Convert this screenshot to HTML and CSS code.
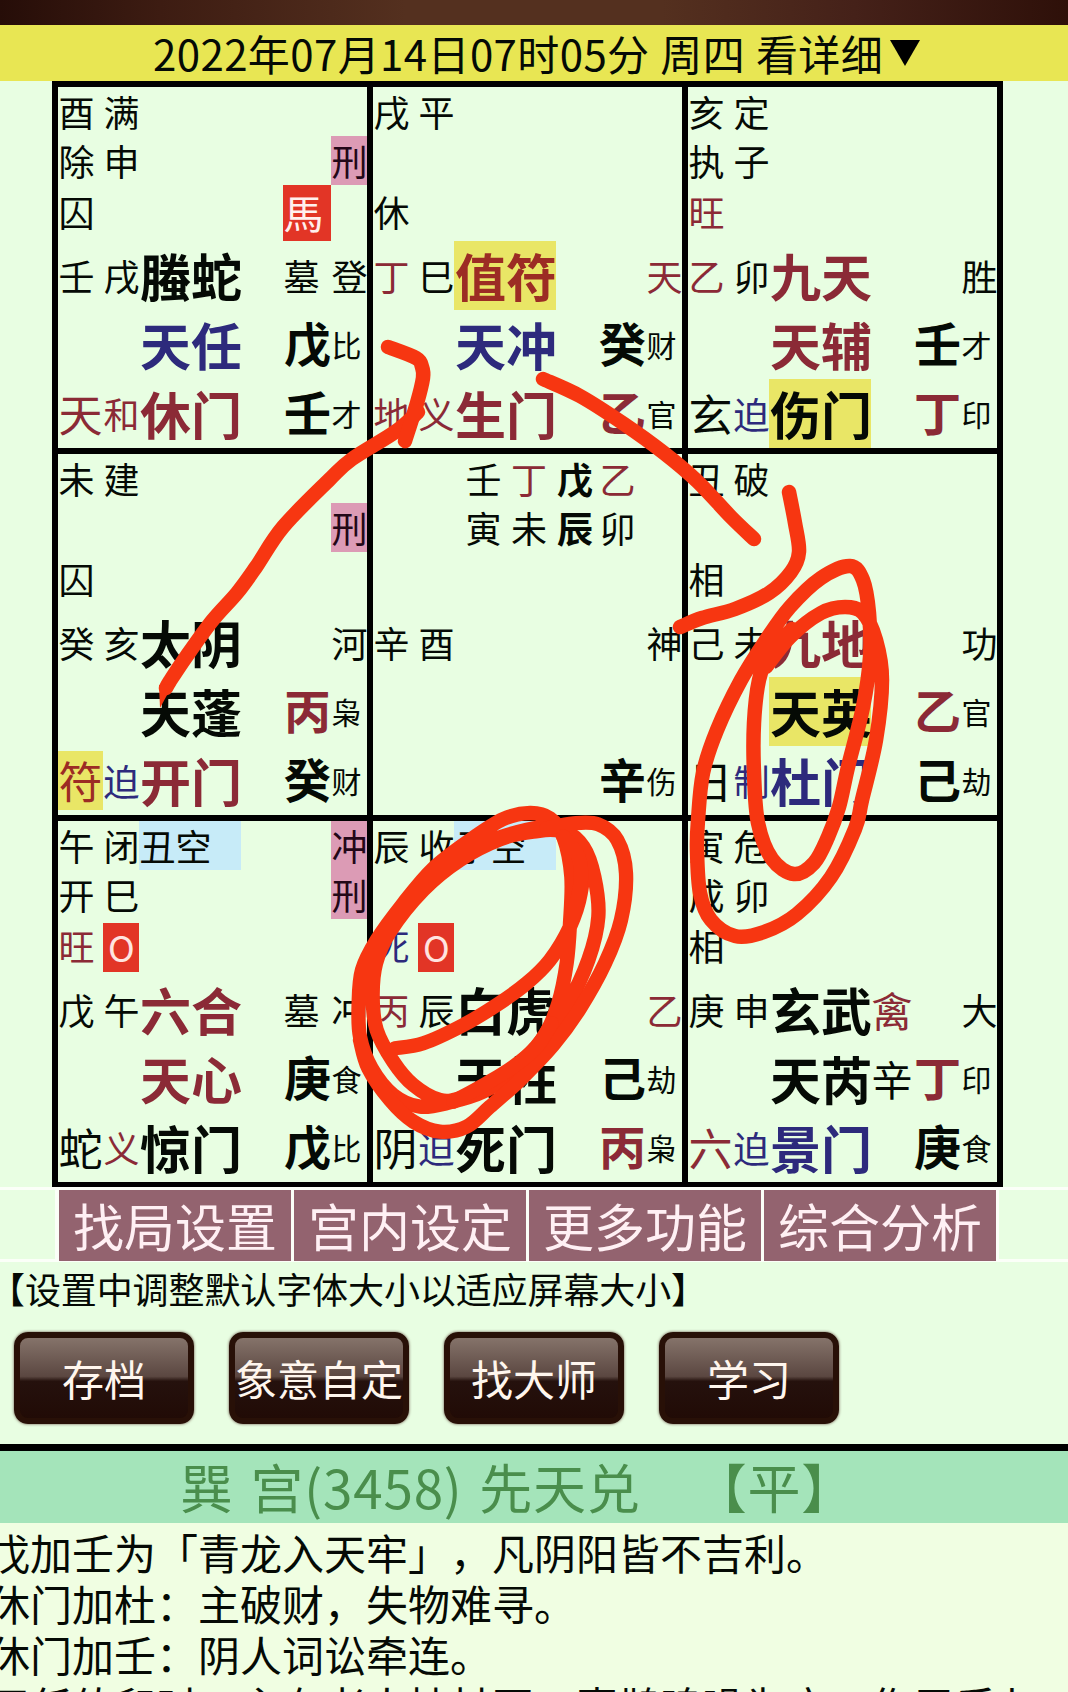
FILE: index.html
```html
<!DOCTYPE html>
<html lang="zh-CN">
<head>
<meta charset="utf-8">
<title>奇门排盘</title>
<link rel="stylesheet" href="styles.css">
</head>
<body>
<div class="topbar"></div>
<header class="date">2022年07月14日07时05分 周四 看详细<span class="caret"></span></header>
<main class="board">
  <section class="palace">
    <span class="r1 c1">酉</span><span class="r1 c2">满</span>
    <span class="r2 c1">除</span><span class="r2 c2">申</span><span class="r2 c6 pink">刑</span>
    <span class="r3 c1">囚</span><span class="r3 c5 horse">馬</span>
    <span class="r4 c1">壬</span><span class="r4 c2">戌</span><b class="r4 c3">螣蛇</b><span class="r4 c5">墓</span><span class="r4 c6">登</span>
    <b class="r5 c3 blue">天任</b><b class="r5 c5 stem">戊</b><span class="r5 c6 rel">比</span>
    <span class="r6 c1 mid red">天</span><span class="r6 c2 red">和</span><b class="r6 c3 red">休门</b><b class="r6 c5 stem">壬</b><span class="r6 c6 rel">才</span>
  </section>
  <section class="palace">
    <span class="r1 c1">戌</span><span class="r1 c2">平</span>
    <span class="r3 c1">休</span>
    <span class="r4 c1 red">丁</span><span class="r4 c2">巳</span><b class="r4 c3 red yellow">值符</b><span class="r4 c6 red">天</span>
    <b class="r5 c3 blue">天冲</b><b class="r5 c5 stem">癸</b><span class="r5 c6 rel">财</span>
    <span class="r6 c1 red">地</span><span class="r6 c2 red">义</span><b class="r6 c3 red">生门</b><b class="r6 c5 stem red">乙</b><span class="r6 c6 rel">官</span>
  </section>
  <section class="palace">
    <span class="r1 c1">亥</span><span class="r1 c2">定</span>
    <span class="r2 c1">执</span><span class="r2 c2">子</span>
    <span class="r3 c1 red">旺</span>
    <span class="r4 c1 red">乙</span><span class="r4 c2">卯</span><b class="r4 c3 red">九天</b><span class="r4 c6">胜</span>
    <b class="r5 c3 red">天辅</b><b class="r5 c5 stem">壬</b><span class="r5 c6 rel">才</span>
    <span class="r6 c1 mid">玄</span><span class="r6 c2 blue">迫</span><b class="r6 c3 yellow">伤门</b><b class="r6 c5 stem red">丁</b><span class="r6 c6 rel">印</span>
  </section>
  <section class="palace">
    <span class="r1 c1">未</span><span class="r1 c2">建</span>
    <span class="r2 c6 pink">刑</span>
    <span class="r3 c1">囚</span>
    <span class="r4 c1">癸</span><span class="r4 c2">亥</span><b class="r4 c3">太阴</b><span class="r4 c6">河</span>
    <b class="r5 c3">天蓬</b><b class="r5 c5 stem red">丙</b><span class="r5 c6 rel">枭</span>
    <span class="r6 c1 mid red yellow">符</span><span class="r6 c2 blue">迫</span><b class="r6 c3 red">开门</b><b class="r6 c5 stem">癸</b><span class="r6 c6 rel">财</span>
  </section>
  <section class="palace">
    <div class="pillars r1"><span>壬</span><span class="red">丁</span><b>戊</b><span class="red">乙</span></div>
    <div class="pillars r2"><span>寅</span><span>未</span><b>辰</b><span>卯</span></div>
    <span class="r4 c1">辛</span><span class="r4 c2">酉</span><span class="r4 c6">神</span>
    <b class="r6 c5 stem">辛</b><span class="r6 c6 rel">伤</span>
  </section>
  <section class="palace">
    <span class="r1 c1">丑</span><span class="r1 c2">破</span>
    <span class="r3 c1">相</span>
    <span class="r4 c1">己</span><span class="r4 c2">未</span><b class="r4 c3 red">九地</b><span class="r4 c6">功</span>
    <b class="r5 c3 yellow">天英</b><b class="r5 c5 stem red">乙</b><span class="r5 c6 rel">官</span>
    <span class="r6 c1 mid">日</span><span class="r6 c2 blue">制</span><b class="r6 c3 blue">杜门</b><b class="r6 c5 stem">己</b><span class="r6 c6 rel">劫</span>
  </section>
  <section class="palace">
    <span class="r1 c1">午</span><span class="r1 c2">闭</span><span class="r1 c3 void">丑空</span><span class="r1 c6 pink">冲</span>
    <span class="r2 c1">开</span><span class="r2 c2">巳</span><span class="r2 c6 pink">刑</span>
    <span class="r3 c1 red">旺</span><span class="r3 c2 ring">O</span>
    <span class="r4 c1">戊</span><span class="r4 c2">午</span><b class="r4 c3 red">六合</b><span class="r4 c5">墓</span><span class="r4 c6">冲</span>
    <b class="r5 c3 red">天心</b><b class="r5 c5 stem">庚</b><span class="r5 c6 rel">食</span>
    <span class="r6 c1 mid">蛇</span><span class="r6 c2 red">义</span><b class="r6 c3">惊门</b><b class="r6 c5 stem">戊</b><span class="r6 c6 rel">比</span>
  </section>
  <section class="palace">
    <span class="r1 c1">辰</span><span class="r1 c2">收</span><span class="r1 c3 void">子空</span>
    <span class="r3 c1 blue">死</span><span class="r3 c2 ring">O</span>
    <span class="r4 c1 red">丙</span><span class="r4 c2">辰</span><b class="r4 c3">白虎</b><span class="r4 c6 red">乙</span>
    <b class="r5 c3">天柱</b><b class="r5 c5 stem">己</b><span class="r5 c6 rel">劫</span>
    <span class="r6 c1 mid">阴</span><span class="r6 c2 blue">迫</span><b class="r6 c3">死门</b><b class="r6 c5 stem red">丙</b><span class="r6 c6 rel">枭</span>
  </section>
  <section class="palace">
    <span class="r1 c1">寅</span><span class="r1 c2">危</span>
    <span class="r2 c1">成</span><span class="r2 c2">卯</span>
    <span class="r3 c1">相</span>
    <span class="r4 c1">庚</span><span class="r4 c2">申</span><b class="r4 c3">玄武</b><span class="r4 c4 red">禽</span><span class="r4 c6">大</span>
    <b class="r5 c3">天芮</b><span class="r5 c4">辛</span><b class="r5 c5 stem red">丁</b><span class="r5 c6 rel">印</span>
    <span class="r6 c1 mid red">六</span><span class="r6 c2 blue">迫</span><b class="r6 c3 blue">景门</b><b class="r6 c5 stem">庚</b><span class="r6 c6 rel">食</span>
  </section>
</main>
<nav class="tabs"><a>找局设置</a><a>宫内设定</a><a>更多功能</a><a>综合分析</a></nav>
<p class="note">【设置中调整默认字体大小以适应屏幕大小】</p>
<div class="actions"><button>存档</button><button>象意自定</button><button>找大师</button><button>学习</button></div>
<h2 class="title"><span>巽 宫(3458) 先天兑</span><span>【平】</span></h2>
<article class="detail">
  <p>戊加壬为「青龙入天牢」，凡阴阳皆不吉利。</p>
  <p>休门加杜：主破财，失物难寻。</p>
  <p>休门加壬：阴人词讼牵连。</p>
  <p>天任值卯时，主有老人持杖至，喜鹊鸣噪为应。作用后七</p>
</article>
<svg class="ink" viewBox="0 0 1068 1692">
  <path data-points="166,688 170,681 186,657 212,621 237,593 256,567 283,527 329,480 352,459 395,432 418,412"/>
  <path class="tip" d="M159 685 L173 684 L160 708 Z"/>
  <path data-points="388,347 416,358 422,367 423,378 417,403 405,441"/>
  <path data-points="543,379 580,396 624,424 664,453 697,481 731,517 754,539"/>
  <path data-points="789,492 795,523 799,552 791,572 769,593 735,609 702,618 680,627"/>
  <path data-points="766,667 790,637 821,613 845,607 863,613 876,640 882,680 876,740 862,800 855,829 831,877 797,914 764,932 735,936 711,920 700,893 697,850 698,820 703,773 717,730 741,680 766,640 790,607 821,578 850,566 863,580 869,613 870,657 863,707 848,767 839,807 828,837 814,863 794,874 772,859 758,823 754,773 754,723 759,680 769,655 792,629"/>
  <g transform="translate(340 790) scale(.33333)">
    <path data-points="165,775 250,760 370,705 470,645 560,580 630,510 690,410 722,310 725,210 665,127 580,125 480,148 360,210 250,300 150,425 108,520 98,620 110,720 160,815 220,885 300,930 370,922 460,882 550,810 615,735 655,640 680,520 690,400 694,260 670,140 630,85 570,69 490,87 390,150 280,235 190,340 110,450 66,540 56,640 60,740 95,835 160,915 240,950 330,937 430,905 520,845 600,770 680,650 745,510 775,380 763,260 730,170 670,120 600,112 480,142 360,190 250,280"/>
    <path data-points="620,115 700,100 775,103 832,150 858,250 843,390 795,520 720,655 640,765 540,870 450,950 380,1010 300,1025 220,995 150,930 85,835 60,750"/>
    <path data-points="670,140 715,200 722,280 695,390"/>
    <path data-points="635,700 590,770 520,830 440,880 340,935"/>
  </g>
</svg>
<script src="ink.js"></script>
</body>
</html>
```
FILE: styles.css
```css
* { box-sizing: border-box; }
body {
  margin: 0;
  width: 1068px;
  height: 1692px;
  overflow: hidden;
  position: relative;
  background: #e8fee2;
  color: #050a05;
  font-family: "Noto Sans CJK SC", sans-serif;
  font-size: 36px;
  white-space: nowrap;
  text-spacing-trim: space-all;
}
p, h2 { margin: 0; font-weight: 400; }
.topbar {
  height: 25px;
  background: linear-gradient(90deg, #260d08 0, #3d1c12 15%, #54301f 38%, #54301f 62%, #452119 80%, #2e1009 100%);
}
.date {
  height: 56px;
  padding-left: 153px;
  line-height: 56px;
  font-size: 42px;
  letter-spacing: .4px;
  word-spacing: 1px;
  background: #e8e653;
}
.caret {
  display: inline-block;
  margin-left: 7px;
  border: 15px solid transparent;
  border-top: 26px solid #000;
  border-bottom: 0;
  vertical-align: 5px;
}
.board {
  width: 951px;
  margin-left: 52px;
  padding: 6px;
  display: grid;
  grid-template: 361px 361px 361px / 309px 309px 309px;
  gap: 6px;
  background: #000;
}
.palace {
  display: grid;
  grid-template-columns: 45px 36px 102px 42px 48px 36px;
  grid-template-rows: 49px 49px 56px 69px 69px 69px;
  align-items: center;
  background: #e8fee2;
}
.palace span { line-height: 49px; text-indent: .5px; }
.palace > b { font-size: 51px; line-height: 68px; height: 69px; font-weight: 700; text-indent: 1px; }
.palace > .stem { font-size: 47px; line-height: 64px; }
.palace > .mid { font-size: 44px; line-height: 59px; }
.palace > .rel { font-size: 30px; line-height: 41px; }
.r1 { grid-row: 1; }
.r2 { grid-row: 2; }
.r3 { grid-row: 3; }
.r4 { grid-row: 4; }
.r5 { grid-row: 5; }
.r6 { grid-row: 6; }
.c1 { grid-column: 1; }
.c2 { grid-column: 2; }
.c3 { grid-column: 3; }
.c4 { grid-column: 4; }
.c5 { grid-column: 5; }
.c6 { grid-column: 6; }
.palace > .r3.c1 { padding-bottom: 3px; }
.palace > .c4 { font-size: 41px; }
.palace > .horse { font-size: 40px; height: 56px; line-height: 54px; background: #e23526; color: #fff0ee; }
.palace > .ring { height: 49px; line-height: 47px; text-align: center; background: #e23526; color: #ffe4e0; }
.red { color: #8b2a36; }
.blue { color: #2d2a7c; }
.pink { background: #dc9bb5; color: #230718; }
.yellow { background: #e9e666; }
.red.yellow { color: #9c2c24; }
.void { background: #c7ebf8; }
.pillars { grid-column: 3 / 7; display: flex; padding-left: 11px; gap: 9px; line-height: 49px; }
.pillars b + span { margin-left: -3px; }
.pillars b { margin-left: 1px; }
.tabs {
  height: 75px;
  margin-top: -1px;
  padding: 0 71px 0 59px;
  display: grid;
  grid-template-columns: repeat(4, 232px);
  gap: 3px;
  border: solid #fbfff8;
  border-width: 3px 0;
  background: linear-gradient(90deg, #e8fee2 55px, #fbfff8 55px, #fbfff8 999px, #e8fee2 999px);
}
.tabs a { background: #93636f; color: #fff0f4; font-size: 51px; line-height: 71px; text-align: center; }
.note { margin-left: -11px; height: 53px; line-height: 52px; letter-spacing: -.1px; }
.actions { display: flex; gap: 35px; padding: 17px 14px 0; height: 129px; }
.actions button {
  width: 180px;
  height: 92px;
  padding: 0;
  border: 6px solid #281007;
  border-radius: 14px;
  background: linear-gradient(#85736a 0, #5b4741 48%, #25110d 54%, #210b06 100%);
  box-shadow: 0 0 3px #654b42;
  color: #fff6ee;
  font: 42px/80px "Noto Sans CJK SC", sans-serif;
}
.title {
  height: 79px;
  padding-left: 180px;
  border-top: 7px solid #000;
  display: flex;
  gap: 53px;
  background: #a4e4ba;
  color: #4a8e4c;
  font-size: 53px;
  line-height: 70px;
  letter-spacing: .8px;
  word-spacing: 4px;
}
.detail {
  height: 169px;
  padding-top: 3px;
  overflow: hidden;
  background: #f0fee2;
  font-size: 42px;
  line-height: 51px;
}
.detail p { margin-left: -12px; }
.ink {
  position: absolute;
  inset: 0;
  width: 1068px;
  height: 1692px;
  fill: none;
  stroke: #f73611;
  stroke-width: 14.5px;
  stroke-linecap: round;
  stroke-linejoin: round;
}
.ink g { stroke-width: 43px; }
.ink .tip { fill: #f73611; stroke: none; }
```
FILE: ink.js
```js
// Smooth each pen stroke through its points (Catmull-Rom to Bezier).
document.querySelectorAll('.ink [data-points]').forEach(function (path) {
  var p = path.dataset.points.split(' ').map(function (s) { return s.split(',').map(Number); });
  var d = 'M' + p[0];
  for (var i = 0; i < p.length - 1; i++) {
    var a = p[i - 1] || p[i], b = p[i], c = p[i + 1], e = p[i + 2] || c;
    d += 'C' + [b[0] + (c[0] - a[0]) / 6, b[1] + (c[1] - a[1]) / 6,
      c[0] - (e[0] - b[0]) / 6, c[1] - (e[1] - b[1]) / 6, c[0], c[1]].join(' ');
  }
  path.setAttribute('d', d);
});
```
